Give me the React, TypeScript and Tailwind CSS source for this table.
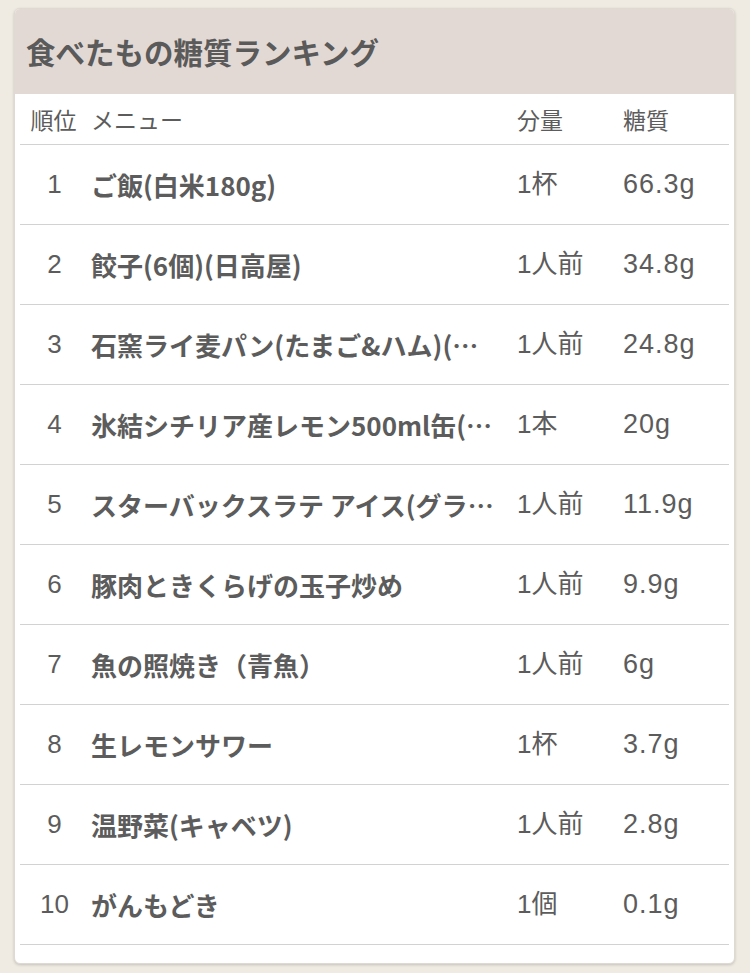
import React from 'react'

interface Row { rank: number; name: string; amount: string; sugar: string }

const rows: Row[] = [
  { rank: 1, name: 'ご飯(白米180g)', amount: '1杯', sugar: '66.3g' },
  { rank: 2, name: '餃子(6個)(日高屋)', amount: '1人前', sugar: '34.8g' },
  { rank: 3, name: '石窯ライ麦パン(たまご&ハム)(ローソン)', amount: '1人前', sugar: '24.8g' },
  { rank: 4, name: '氷結シチリア産レモン500ml缶(キリン)', amount: '1本', sugar: '20g' },
  { rank: 5, name: 'スターバックスラテ アイス(グランデ)', amount: '1人前', sugar: '11.9g' },
  { rank: 6, name: '豚肉ときくらげの玉子炒め', amount: '1人前', sugar: '9.9g' },
  { rank: 7, name: '魚の照焼き（青魚）', amount: '1人前', sugar: '6g' },
  { rank: 8, name: '生レモンサワー', amount: '1杯', sugar: '3.7g' },
  { rank: 9, name: '温野菜(キャベツ)', amount: '1人前', sugar: '2.8g' },
  { rank: 10, name: 'がんもどき', amount: '1個', sugar: '0.1g' },
]

const font = "font-['Liberation_Sans','Noto_Sans_CJK_JP',sans-serif]"
const cols = 'grid grid-cols-[66px_1fr_106px_112px] items-center'

export default function App() {
  return (
    <div className={`min-h-[973px] bg-[#efebe3] pt-2 pl-[14px] pr-[15px] ${font} text-[#5c5c5c]`}>
      <div className="bg-white rounded-md overflow-hidden border border-[#dedad2] shadow-[0_1px_3px_rgba(0,0,0,0.18)] pb-[18px]">
        <div className="h-[85px] bg-[#e3d9d4] flex items-center pl-[11px]">
          <h1 className="text-[29.5px] font-bold text-[#5a5a5a] font-['Noto_Sans_CJK_JP',sans-serif] leading-none">食べたもの糖質ランキング</h1>
        </div>
        <div className="px-[5px]">
          <div className={`${cols} h-[51px] border-b border-[#d2d2d2] text-[23px] font-['Noto_Sans_CJK_JP',sans-serif]`}>
            <div className="text-center pl-[1px]">順位</div>
            <div className="pl-[5px]">メニュー</div>
            <div className="pl-[6px]">分量</div>
            <div className="pl-[6px]">糖質</div>
          </div>
          {rows.map(r => (
            <div key={r.rank} className={`${cols} h-[80px] border-b border-[#d2d2d2] text-[26px]`}>
              <div className="text-center pl-[3px]">{r.rank}</div>
              <div className="pl-[5px] pr-[10px] truncate font-semibold font-['Noto_Sans_CJK_JP',sans-serif]">{r.name}</div>
              <div className="pl-[6px]">{r.amount}</div>
              <div className="pl-[6px] text-[27px] tracking-[1px]">{r.sugar}</div>
            </div>
          ))}
        </div>
      </div>
    </div>
  )
}
